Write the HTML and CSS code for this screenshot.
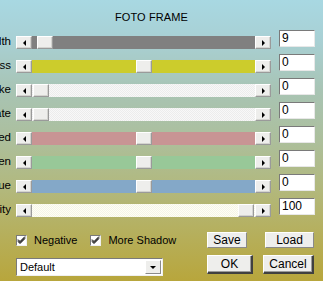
FILE: index.html
```html
<!DOCTYPE html>
<html>
<head>
<meta charset="utf-8">
<link rel="stylesheet" href="styles.css">
</head>
<body>
<div class="dlg">
  <div class="title">FOTO FRAME</div>
  <div class="rows">
    <div class="row">
      <div class="lbl">Width</div>
      <div class="sb"><div class="btn"><span class="al"></span></div><div class="track t-grey"><div class="thumb" style="margin-left:5px"></div></div><div class="btn"><span class="ar"></span></div></div>
      <div class="num">9</div>
    </div>
    <div class="row">
      <div class="lbl">Brightness</div>
      <div class="sb"><div class="btn"><span class="al"></span></div><div class="track t-yellow"><div class="thumb" style="margin-left:104px"></div></div><div class="btn"><span class="ar"></span></div></div>
      <div class="num">0</div>
    </div>
    <div class="row">
      <div class="lbl">Stroke</div>
      <div class="sb"><div class="btn"><span class="al"></span></div><div class="track t-white"><div class="thumb" style="margin-left:1px"></div></div><div class="btn"><span class="ar"></span></div></div>
      <div class="num">0</div>
    </div>
    <div class="row">
      <div class="lbl">Saturate</div>
      <div class="sb"><div class="btn"><span class="al"></span></div><div class="track t-white"><div class="thumb" style="margin-left:1px"></div></div><div class="btn"><span class="ar"></span></div></div>
      <div class="num">0</div>
    </div>
    <div class="row">
      <div class="lbl">Red</div>
      <div class="sb"><div class="btn"><span class="al"></span></div><div class="track t-red"><div class="thumb" style="margin-left:104px"></div></div><div class="btn"><span class="ar"></span></div></div>
      <div class="num">0</div>
    </div>
    <div class="row">
      <div class="lbl">Green</div>
      <div class="sb"><div class="btn"><span class="al"></span></div><div class="track t-green"><div class="thumb" style="margin-left:104px"></div></div><div class="btn"><span class="ar"></span></div></div>
      <div class="num">0</div>
    </div>
    <div class="row">
      <div class="lbl">Blue</div>
      <div class="sb"><div class="btn"><span class="al"></span></div><div class="track t-blue"><div class="thumb" style="margin-left:104px"></div></div><div class="btn"><span class="ar"></span></div></div>
      <div class="num">0</div>
    </div>
    <div class="row">
      <div class="lbl">Opacity</div>
      <div class="sb"><div class="btn"><span class="al"></span></div><div class="track t-cream"><div class="thumb" style="margin-left:206px"></div></div><div class="btn"><span class="ar"></span></div></div>
      <div class="num">100</div>
    </div>
  </div>
  <div class="bottom">
    <div class="left">
      <div class="checks">
        <label class="chk"><span class="box"><svg width="9" height="9" viewBox="0 0 9 9"><path d="M1 3.5 L3 5.5 L8 0.5 M1 4.5 L3 6.5 L8 1.5 M1 5.5 L3 7.5 L8 2.5" stroke="#000" stroke-width="1" fill="none"/></svg></span>Negative</label>
        <label class="chk"><span class="box"><svg width="9" height="9" viewBox="0 0 9 9"><path d="M1 3.5 L3 5.5 L8 0.5 M1 4.5 L3 6.5 L8 1.5 M1 5.5 L3 7.5 L8 2.5" stroke="#000" stroke-width="1" fill="none"/></svg></span>More Shadow</label>
      </div>
      <div class="combo"><span class="ctext">Default</span><span class="cbtn"><span class="ad"></span></span></div>
    </div>
    <div class="buttons">
      <div class="brow">
        <div class="pb pb-save">Save</div>
        <div class="pb pb-load">Load</div>
      </div>
      <div class="brow brow2">
        <div class="pb pb-ok strong">OK</div>
        <div class="pb pb-cancel strong">Cancel</div>
      </div>
    </div>
  </div>
</div>
</body>
</html>
```

FILE: styles.css
```css
html, body {
  margin: 0;
  padding: 0;
}
body {
  width: 323px;
  height: 281px;
  overflow: hidden;
  font-family: "Liberation Sans", Arial, sans-serif;
  font-size: 11px;
  color: #000;
  background: linear-gradient(to bottom, #a8d8e2 0px, #a8d0d4 40px, #a8c4b4 90px, #acbf9c 140px, #b2b87c 190px, #b6ae58 240px, #b8a63c 281px);
}
.dlg {
  width: 323px;
  height: 281px;
}
.title {
  padding: 12px 0 0 115px;
  height: 21px;
  line-height: 11px;
  font-size: 11px;
  letter-spacing: 0.1px;
}
.rows {
  display: flex;
  flex-direction: column;
  gap: 8px;
}
.row {
  display: grid;
  grid-template-columns: 11px 255px 36px;
  column-gap: 5px;
  height: 16px;
  align-items: start;
}
.row .num { margin-left: 3px; }
.lbl {
  height: 16px;
  line-height: 16px;
  overflow: hidden;
  direction: rtl;
  text-align: left;
  white-space: nowrap;
  font-size: 11.5px;
}
.sb {
  margin-top: 3px;
  height: 13px;
  display: flex;
}
.btn, .thumb {
  box-sizing: border-box;
  width: 16px;
  height: 13px;
  background: #eeeeec;
  border-top: 1px solid #ffffff;
  border-left: 1px solid #ffffff;
  border-right: 1px solid #9a9a9a;
  border-bottom: 1px solid #9a9a9a;
  box-shadow: inset -1px -1px 0 #d4d4d0;
  display: flex;
  align-items: center;
  justify-content: center;
  flex: none;
}
.al {
  width: 0; height: 0;
  border-top: 3px solid transparent;
  border-bottom: 3px solid transparent;
  border-right: 3px solid #000;
}
.ar {
  width: 0; height: 0;
  border-top: 3px solid transparent;
  border-bottom: 3px solid transparent;
  border-left: 3px solid #000;
}
.track {
  flex: 1;
  display: flex;
  height: 13px;
}
.thumb { width: 16px; }
.t-grey { background: #808080; }
.t-yellow { background: #cccc2c; }
.t-red { background: #c89494; }
.t-green { background: #98c898; }
.t-blue { background: #84a8c8; }
.t-white {
  background: repeating-conic-gradient(#f8f8f8 0 25%, #ececec 0 50%) 0 0 / 2px 2px;
}
.t-cream {
  background: repeating-conic-gradient(#fffff4 0 25%, #f4f4e8 0 50%) 0 0 / 2px 2px;
}
.num {
  box-sizing: border-box;
  width: 36px;
  height: 17px;
  background: #fff;
  border-top: 1px solid #7a7a7a;
  border-left: 1px solid #7a7a7a;
  border-right: 1px solid #e8e8e8;
  border-bottom: 1px solid #e8e8e8;
  padding-left: 2px;
  font-size: 12px;
  line-height: 15px;
  margin-top: -3px;
}
.bottom {
  display: flex;
  margin-top: 15px;
}
.left {
  width: 191px;
  padding-left: 16px;
  box-sizing: border-box;
}
.checks {
  display: flex;
  gap: 13px;
  height: 16px;
  align-items: center;
}
.chk {
  display: flex;
  align-items: center;
  gap: 7px;
  font-size: 11px;
}
.box {
  box-sizing: border-box;
  width: 11px;
  height: 11px;
  background: #fff;
  border-top: 1px solid #7a7a7a;
  border-left: 1px solid #7a7a7a;
  border-right: 1px solid #f0f0f0;
  border-bottom: 1px solid #f0f0f0;
  display: flex;
  align-items: center;
  justify-content: center;
}
.combo {
  margin-top: 10px;
  width: 147px;
  height: 18px;
  box-sizing: border-box;
  background: #fff;
  border-top: 1px solid #7a7a7a;
  border-left: 1px solid #7a7a7a;
  border-right: 1px solid #f0f0f0;
  border-bottom: 1px solid #f0f0f0;
  display: flex;
  align-items: center;
  font-size: 11px;
}
.ctext { flex: 1; padding-left: 3px; }
.cbtn {
  box-sizing: border-box;
  width: 16px;
  height: 14px;
  margin-right: 1px;
  background: #eeeeec;
  border-top: 1px solid #fff;
  border-left: 1px solid #fff;
  border-right: 1px solid #8a8a8a;
  border-bottom: 1px solid #8a8a8a;
  display: flex;
  align-items: center;
  justify-content: center;
}
.ad {
  width: 0; height: 0;
  border-left: 3px solid transparent;
  border-right: 3px solid transparent;
  border-top: 3px solid #000;
}
.buttons {
  padding-left: 16px;
}
.brow {
  display: flex;
  gap: 18px;
}
.brow2 {
  margin-top: 7px;
  gap: 10px;
}
.pb {
  box-sizing: border-box;
  height: 16px;
  background: #eeeeec;
  border-top: 1px solid #ffffff;
  border-left: 1px solid #ffffff;
  border-right: 1px solid #8a8a8a;
  border-bottom: 1px solid #8a8a8a;
  display: flex;
  align-items: center;
  justify-content: center;
  font-size: 12px;
}
.pb-save { width: 40px; }
.pb-load { width: 49px; }
.strong {
  height: 19px;
  border-right: 2px solid #404040;
  border-bottom: 2px solid #404040;
  box-shadow: inset -1px -1px 0 #9a9a9a;
}
.pb-ok { width: 46px; }
.pb-cancel { width: 51px; }
```
